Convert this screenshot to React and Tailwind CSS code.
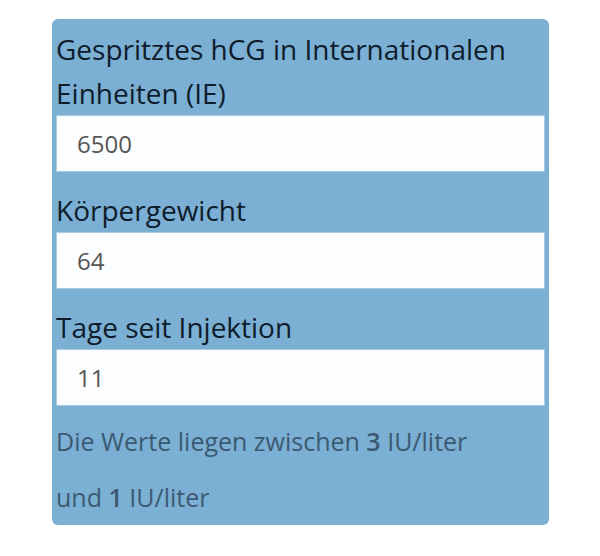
const font = { fontFamily: '"Open Sans", "Noto Sans", sans-serif' };

function Field({ label, value }) {
  return (
    <div>
      <label className="block text-[28px] leading-[44px] text-[#0f1c2b]">{label}</label>
      <input
        readOnly
        value={value}
        className="block h-[57px] w-full border border-[#a9cce4] bg-[#fcfdfe] pl-[20px] text-[24px] text-[#555] outline-none"
      />
    </div>
  );
}

export default function App() {
  return (
    <div className="min-h-[556px] bg-white pt-[19px]" style={font}>
      <div className="ml-[52px] w-[497px] rounded-[6px] bg-[#7bafd3] px-[4px] pt-[8px]">
        <div className="flex flex-col gap-[16px]">
          <Field label="Gespritztes hCG in Internationalen Einheiten (IE)" value="6500" />
          <Field label="Körpergewicht" value="64" />
          <Field label="Tage seit Injektion" value="11" />
        </div>
        <div className="mt-[7px] text-[25px] leading-[56px] text-[#3b5a72]">
          <p>
            Die Werte liegen zwischen <b className="font-semibold">3</b> IU/liter
          </p>
          <p>
            und <b className="font-semibold">1</b> IU/liter
          </p>
        </div>
      </div>
    </div>
  );
}
